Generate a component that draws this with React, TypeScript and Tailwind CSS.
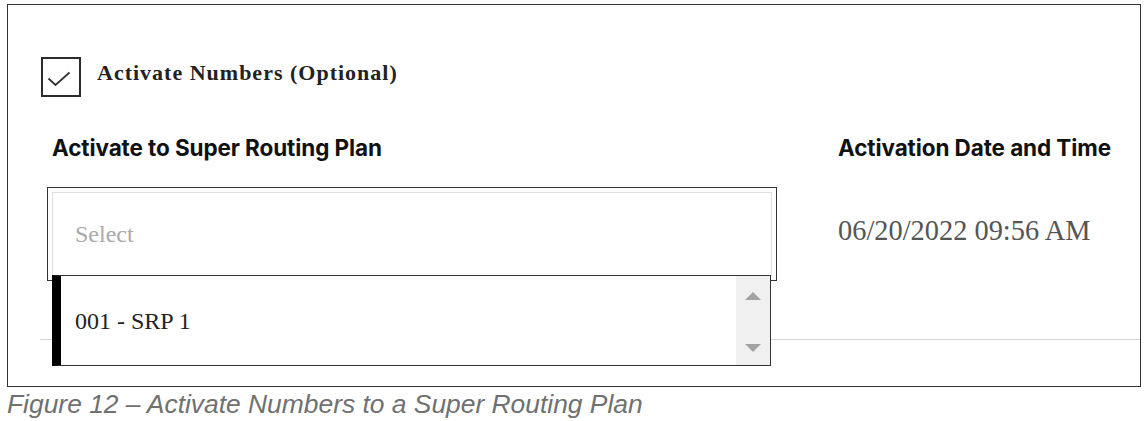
import React from "react";

const serif = "font-['Liberation_Serif',serif]";
const sans = "font-['Inter',sans-serif]";

export default function App() {
  return (
    <div className="w-[1147px] h-[421px] bg-white pl-[7px] pt-[4px] overflow-hidden">
      {/* framed screenshot */}
      <div className="relative w-[1134px] h-[383px] border border-[#333]">
        <div className="pt-[52px] pl-[33px] flex items-start">
          <Checkbox />
          <span className={`${serif} ml-[16px] mt-[4.5px] text-[22px] leading-none font-bold tracking-[1px] text-[#222]`}>
            Activate Numbers (Optional)
          </span>
        </div>

        <div className="flex pl-[39px] mt-[40px]">
          {/* plan select */}
          <div className="w-[730px]">
            <h3 className={`${sans} pl-[5px] text-[22.5px] leading-none font-bold tracking-[-0.1px] text-[#111]`}>
              Activate to Super Routing Plan
            </h3>
            <div className="relative mt-[27.5px]">
              <div className="h-[94px] border-[1.5px] border-[#333] p-[4px]">
                <div className="h-full border border-[#ddd] flex items-center pl-[22px]">
                  <span className={`${serif} text-[24px] leading-none text-[#aaa]`}>Select</span>
                </div>
              </div>
              <Dropdown />
            </div>
          </div>

          {/* activation date */}
          <div className="ml-[61px]">
            <h3 className={`${sans} text-[22.5px] leading-none font-bold tracking-[-0.1px] text-[#111]`}>
              Activation Date and Time
            </h3>
            <p className={`${serif} mt-[57.5px] text-[28.4px] leading-none text-[#555]`}>
              06/20/2022 09:56 AM
            </p>
          </div>
        </div>

        <div className="mt-[58px] ml-[32px] h-px bg-[#d4d4d4]" />
      </div>

      <p className="mt-[4px] font-['Liberation_Sans',sans-serif] italic text-[26.4px] leading-none text-[#707070]">
        Figure 12 – Activate Numbers to a Super Routing Plan
      </p>
    </div>
  );
}

function Checkbox() {
  return (
    <div className="w-[40px] h-[40px] border-2 border-[#2b2b2b] bg-white">
      <svg width="36" height="36" viewBox="0 0 36 36" fill="none">
        <path d="M5.5 19.5 L12.5 26 L26.5 13.5" stroke="#333" strokeWidth="1.8" />
      </svg>
    </div>
  );
}

function Dropdown() {
  return (
    <div className="absolute left-[5px] top-[88px] z-10 w-[719px] h-[91px] bg-white border-[1.5px] border-l-[9px] border-[#333] border-l-black flex">
      <div className="flex-1 flex items-center pl-[14px]">
        <span className={`${serif} text-[24px] leading-none text-[#222]`}>001 - SRP 1</span>
      </div>
      <div className="w-[34px] h-full bg-[#f0f0f0] flex flex-col items-center justify-between pt-[16px] pb-[13px]">
        <svg width="16" height="8" viewBox="0 0 16 8">
          <path d="M8 0 L16 8 L0 8 Z" fill="#a3a3a3" />
        </svg>
        <svg width="16" height="8" viewBox="0 0 16 8">
          <path d="M0 0 L16 0 L8 8 Z" fill="#a3a3a3" />
        </svg>
      </div>
    </div>
  );
}
